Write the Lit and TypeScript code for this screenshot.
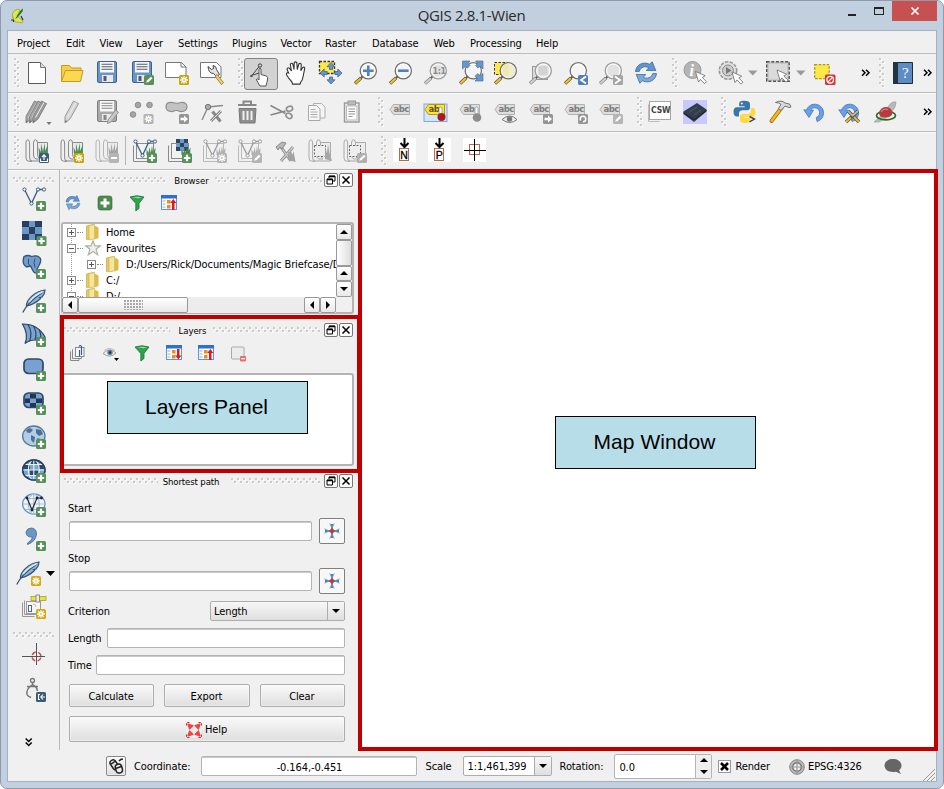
import { LitElement, html, css, svg, nothing } from "lit";
import { customElement } from "lit/decorators.js";

const GRAY = "#8c8c8c";
const BLUE = "#6a95c8";
const NAVY = "#3a5a78";

const icon = (body: unknown, size = 24) =>
  html`<svg class="ic" width=${size} height=${size} viewBox="0 0 ${size} ${size}">${body}</svg>`;

/* ---------- badges (10px squares in the lower right corner) ---------- */
const sq = (c: string, mark: unknown, x = 14, y = 14) =>
  svg`<g transform="translate(${x} ${y})"><rect x="0" y="0" width="10" height="10" rx="1.6" fill=${c}/>${mark}</g>`;
const plus = (x = 14, y = 14) => sq("#58905a", svg`<path d="M5 1.8v6.4M1.8 5h6.4" stroke="#fff" stroke-width="2.2"/>`, x, y);
const starMark = svg`<path d="M5 1.2v7.6M1.2 5h7.6M2.3 2.3l5.4 5.4M7.7 2.3l-5.4 5.4" stroke="#fff" stroke-width="1.3"/><circle cx="5" cy="5" r="1.1" fill="#e6cf70"/>`;
const star = (c = "#c9a50c", x = 14, y = 14) => sq(c, starMark, x, y);
const pen = (c = "#58905a", x = 14, y = 14) => sq(c, svg`<path d="M2.2 7.8l.8-2.4L7 1.8l1.5 1.4-3.8 3.9z" fill="#fff"/>`, x, y);
const minus = (c: string) => sq(c, svg`<path d="M2 5h6" stroke="#fff" stroke-width="2"/>`);
const arrowB = (c: string) => sq(c, svg`<path d="M1.5 3.8h3.5V1.5L9 5 5 8.5V6.2H1.5z" fill="#fff"/>`);

/* ---------- building blocks ---------- */
const floppy = (c: string, e: string, l: string) => svg`
  <rect x="2.5" y="0.5" width="19" height="21" rx="1.5" fill=${c} stroke=${e}/>
  <rect x="5" y="1" width="14" height="10.5" fill="#f8f8f8"/>
  <path d="M6.5 3.2h11M6.5 5.7h11M6.5 8.2h11" stroke=${l} stroke-width="1.1"/>
  <rect x="7" y="14" width="11" height="7" fill="#e9e9e9"/><rect x="8.5" y="15" width="3" height="5" fill=${l}/>`;

const lens = (handle: string, inner: unknown = nothing, dim = false) => svg`
  <path d="M8.8 15.2L6 18" stroke="#555" stroke-width="2"/>
  <path d="M7 17L1 22.6" stroke=${dim ? "#8a8a8a" : "#6b5a20"} stroke-width="3.4"/>
  <path d="M6.8 17.2L1.4 22.2" stroke=${handle} stroke-width="2"/>
  <circle cx="14.3" cy="9.7" r="8.1" fill=${dim ? "#e2e2e2" : "#f4f4f2"} stroke=${dim ? "#9d9d9d" : "#6f6f6f"} stroke-width="1.3"/>
  <circle cx="14.3" cy="9.7" r="6.6" fill="none" stroke="#fff" stroke-width="1"/>${inner}`;

const cursor = (x: number, y: number) =>
  svg`<path transform="translate(${x} ${y})" d="M0 0l3 10.5 2-2.6 4 4.3 2-2-4.2-4.2 2.9-1.8z" fill="#fff" stroke="#777" stroke-width=".9"/>`;

const refresh = (s: number) => svg`<g transform="scale(${s})">
  <path d="M1.5 10.5C2 4 9 0 15.5 3.2L18.2.8 21.8 9.6l-9.6-.2 2.6-2.6C11 4.800 6.500 6 5.200 10.500z" fill="#5f95d0" stroke="#40699c" stroke-width=".8"/>
  <path d="M22.500 12.500C22 19 15 23 8.500 19.800L5.800 22.200 2.200 13.400l9.600.2-2.600 2.600c3.800 2 8.300.8 9.600-3.700z" fill="#7aa9dc" stroke="#40699c" stroke-width=".8"/></g>`;

const undo = svg`<path d="M3.500 10A8.800 8.800 0 1 1 14 21.500l-.8-4A5 5 0 1 0 7.500 10l3 .2L6 17.500.8 9.800z" fill="#6ba0e4" stroke="#4076be" stroke-width=".8"/>`;

const tag = (txt: string, on = false) => svg`
  <path d="M1 9.500L4.500 4.500H20.500V14.500H4.500z" fill=${on ? "#ffe23a" : "#dedede"} stroke=${on ? "#b39a14" : "#b0b0b0"}/>
  <text x="4.600" y="12" class="tag" fill=${on ? "#5b5426" : "#7c7c7c"}>${txt}</text>`;

const pencil = (x: number, c = "#d5d5d5", e = "#9a9a9a") => svg`<g transform="translate(${x} 0)"><path d="M3 16.500L11.500 1l5 2.600L8 19l-5 4z" fill=${c} stroke=${e}/><path d="M5.500 17.500L14 2.500" stroke="#f0f0f0"/><path d="M3 23l.4-3 2 1.300z" fill="#777"/></g>`;

const gpen = svg`<path d="M13 20l7.500-10 3 2.200L16 22l-3.500 1.500z" fill="#c8c8c8" stroke="#8e8e8e" stroke-width=".9"/>`;

const scroll = (e: string, f: string, grass: string | null) => svg`
  <path d="M12.500 3.500h10v18.500H4" fill=${f} stroke=${e}/>
  <path d="M1 4q0-3.200 1.800-3.200T4.600 4v15q.2 3.200 2.400 3.200H3.800Q1 22.200 1 19z" fill="#f0f0f0" stroke=${e}/>
  <path d="M8.500 4q0-3.200 2-3.200t2 3.200v11q0 3.500 2.500 5H11q-2.500-1-2.500-4z" fill="#f0f0f0" stroke=${e}/>
  ${grass ? svg`<path d="M14 15l-.5-7 2.300 5 .2-8.500 2 8L19.700 4l.5 8 2.600-6.500L22.500 15z" fill=${grass}/>` : nothing}`;

const pages = (e: string) => svg`<path d="M.5 6.500v16h14" fill="none" stroke=${e}/><rect x="3.500" y="4.500" width="17" height="15" fill="#f2f2f2" stroke=${e}/>`;
const grassy = (c: string) => svg`<path d="M13.500 16V10l2 4 .8-6 1.500 6L19 6.500l1 6.500 2.500-4.500L22 16z" fill=${c}/>`;
const vee = (c: string) => svg`<path d="M2.500 2.500l7 14L16 2.500h6" fill="none" stroke=${c} stroke-width="1.300"/><circle cx="2.500" cy="2.500" r="1.600" fill="#fff" stroke=${c}/><circle cx="9.500" cy="16.500" r="1.600" fill="#fff" stroke=${c}/><circle cx="16" cy="2.500" r="1.600" fill="#fff" stroke=${c}/><circle cx="22" cy="2.500" r="1.600" fill="#fff" stroke=${c}/>`;
const hammers = svg`<path d="M8 8L18 22M20 8L8 22" stroke="#8d8d8d" stroke-width="3"/><path d="M8 8L18 22M20 8L8 22" stroke="#cfcfcf" stroke-width="1.200"/><path d="M3 8l6-5 4 1-4 6-2-2-2 3z" fill="#b9b9b9" stroke="#8a8a8a"/>`;
const hand = svg`<path d="M4.500 12L3 8q1-2.400 2.700-.3L7.500 10 6.300 3.500q.8-2.300 2.500-.5L10 8.500 10.200 1.800q1.300-1.900 2.600 0L13.300 8.500 14.800 3q1.600-1.500 2.500.6L16.800 9.700l2-3.300q1.700-.8 1.900 1L19 16q-.4 3.500-2.500 5.500l-.5 1.600H8.500L8 21q-3-3-5.500-7.300-.2-2.600 2-1.700z" fill="#fff" stroke="#333" stroke-width="1.100"/>`;
const arrow4 = svg`<path d="M12 1.500l4 4.200h-2.500v2.800h-3V5.700H8zM12 23l4-4.200h-2.500V16h-3v2.800H8zM1 12l4.200-4v2.500h3v3h-3V16zM23 12l-4.200-4v2.500h-3v3h3V16z" fill="#6696cd" stroke="#41648c" stroke-width=".8"/>`;
const globe = (f: string, e: string) => svg`<ellipse cx="11.800" cy="11" rx="11.200" ry="10" fill=${f} stroke=${e} stroke-width="1.300"/>`;
const meridians = (e: string) => svg`<path d="M11.800 1v20M1 11h22M3 5.500h18M3 16.500h18" stroke=${e} stroke-width="1.100"/><ellipse cx="11.800" cy="11" rx="5.500" ry="10" fill="none" stroke=${e} stroke-width="1.100"/>`;
const feather = svg`<path d="M4.500 17C4 11 13 2 23 1c0 3-1 5-3 7l-2.500.8 1 .7Q13 15 4.500 17z" fill="#8fb4dc" stroke="#35536f" stroke-width="1.200"/><path d="M.8 23.500Q5 14 21 3" fill="none" stroke="#35536f" stroke-width="1.300"/><path d="M7 13Q12 6.500 21 2.500" fill="none" stroke="#dbe8f5" stroke-width="1.500"/>`;

/* ---------- icon table ---------- */
const I: Record<string, unknown> = {
  newdoc: svg`<path d="M3.500 1.500h12l5 5v16h-17z" fill="#fff" stroke="#5c5c5c"/><path d="M15.500 1.500v5h5" fill="#ddd" stroke="#777"/>`,
  open: svg`<path d="M1.500 20V4.500h8l2 2.500h9.500v4" fill="#f7cf45" stroke="#c3992a"/><path d="M1.500 20.500L5.500 9.500h17.500l-2.500 11z" fill="#fcd850" stroke="#c3992a"/>`,
  save: floppy(BLUE, "#3f6087", "#4c5c6e"),
  saveas: svg`${floppy(BLUE, "#3f6087", "#4c5c6e")}${pen()}`,
  composer: svg`<path d="M.5 1.500h16l4.500 4.500v10.500H.500z" fill="#fff" stroke="#777"/><path d="M16 1.500V6h5" fill="none" stroke="#777"/>${star()}`,
  manager: svg`<path d="M.5 1.500h16l4.500 4.500v10.500H.500z" fill="#fff" stroke="#777"/><path d="M8 5.500l3.500 3 2-1L13 4.500q3.500.5 3.500 4l3 5-3 2-3-3q-5 0-5.500-7z" fill="#e2e2e2" stroke="#444"/><path d="M17 13.500l6.500 8-2 2.200-6.500-8.500z" fill="#f2cf66" stroke="#8c7430" stroke-width=".8"/>`,
  touch: svg`<path d="M2 14.500L11 3.500M4 13l6-2" stroke="#444"/><circle cx="11" cy="3.500" r="1.700" fill="#ccc" stroke="#444"/><circle cx="2.500" cy="14" r="1.300" fill="#555"/><path d="M10 16V7q1-1.800 2 0v5.500l5.500 1.500q1.500 1 1 4l-1.500 6H11L7.500 18q0-2.500 2.500 0z" fill="#fff" stroke="#555"/>`,
  hand,
  pansel: svg`<rect x=".5" y=".500" width="15" height="12" fill="#ffe84a" stroke="#333" stroke-width="1.300" stroke-dasharray="2.500 1.500"/>${arrow4}`,
  zin: lens("#e9b935", svg`<path d="M14.300 4.500v10.500M9 9.700h10.600" stroke="#4f82bd" stroke-width="2.600"/>`),
  zout: lens("#f0c23e", svg`<path d="M9 9.700h10.600" stroke="#4f82bd" stroke-width="2.600"/>`),
  z11: lens("#cfcfcf", svg`<text x="8.600" y="13" class="one">1:1</text>`, true),
  zfull: svg`${lens("#f0c23e")}<path d="M3.500 0h7.500L9 2.500 11 4.500 8.500 7 6.500 5.200 3.500 8zM24 0v8L21.200 5.200 19 7l-2.500-2.500L18.700 2.500 16.500 0zM24 20h-8l2.400-2.400-2.400-2.300 2.700-2.700 2.400 2.400L24 12.500z" fill="#6a97ca" stroke="#3f6690" stroke-width=".6"/>`,
  zsel: svg`<rect x=".5" y="1.500" width="14" height="12" fill="#ffe84a" stroke="#333" stroke-dasharray="2.500 1.500"/>${lens("#f0c23e")}<circle cx="14.300" cy="9.700" r="7" fill="#f0edcf"/><path d="M9 5.500q2-2.500 5.500-2.500v12q-3.500 0-5.500-2.500z" fill="#efe8b0"/>`,
  zlayer: svg`<rect x="3.500" y="5.500" width="15" height="13" fill="#ddd" stroke="#999"/>${lens("#cfcfcf", nothing, true)}<rect x="9.500" y="5" width="9" height="9" fill="#d3d3d3"/>`,
  zlast: svg`${lens("#f0c23e")}${sq("#4f82bd", svg`<path d="M8 1.500L3 5l5 3.500" fill="none" stroke="#fff" stroke-width="1.800"/>`)}`,
  znext: svg`${lens("#cfcfcf", nothing, true)}${sq("#a5a5a5", svg`<path d="M2 1.500L7 5 2 8.500" fill="none" stroke="#fff" stroke-width="1.800"/>`)}`,
  refresh: refresh(1),
  ident: svg`<circle cx="9.500" cy="9" r="8.500" fill="#b4b4b4" stroke="#9b9b9b"/><text x="6.500" y="14.500" class="info">i</text>${cursor(12.500, 10.500)}`,
  action: svg`<circle cx="10" cy="9.500" r="8.700" fill="#e2e2e2" stroke="#999" stroke-width="1.600" stroke-dasharray="3.500 1.200"/><circle cx="10" cy="9.500" r="5.500" fill="#cdcdcd" stroke="#888"/><path d="M8 6l5.500 3.500L8 13z" fill="#777"/>${cursor(14, 11)}`,
  select: svg`<rect x=".7" y=".700" width="22.500" height="19.500" fill="#c9c9c9" stroke="#555" stroke-width="1.400" stroke-dasharray="3 1.600"/><rect x="3" y="3" width="18" height="15" fill="#dadada"/>${cursor(11, 9)}`,
  desel: svg`<rect x=".7" y="3.700" width="14.500" height="14" fill="#ffe84a" stroke="#a8912a" stroke-width="1.300" stroke-dasharray="2.500 1.500"/><rect x="11" y="13.500" width="10.500" height="10.500" rx="1.500" fill="#d63238"/><circle cx="16.200" cy="18.700" r="3.300" fill="none" stroke="#fff" stroke-width="1.300"/><path d="M14 21l4.500-4.600" stroke="#fff" stroke-width="1.200"/>`,
  book: svg`<path d="M.5 1.500h19v21H.500z" fill="#5c8cc4" stroke="#222b36"/><rect x="0" y="1" width="5" height="22" fill="#25323f"/><text x="9" y="17" class="q">?</text>`,

  pencils: svg`${pencil(-2, "#a5a5a5", "#858585")}${pencil(1.5, "#a5a5a5", "#858585")}${pencil(5, "#9a9a9a", "#858585")}<path d="M21.500 22h5l-2.500 3z" fill="#777"/>`,
  pencil: svg`${pencil(2)}`,
  saveed: svg`${floppy("#a9a9a9", "#7d7d7d", "#888")}${gpen}`,
  addpt: svg`<circle cx="8" cy="5" r="2.800" fill="#a6a6a6" stroke=${GRAY}/><circle cx="19.500" cy="5" r="2.800" fill="#a6a6a6" stroke=${GRAY}/><circle cx="3" cy="14.500" r="2.800" fill="#a6a6a6" stroke=${GRAY}/>${star("#b1b1b1", 13.500, 14)}`,
  movef: svg`<path d="M1 6.500Q1 1.500 8 2.500q4 1.500 8 0 6-.5 6 4.500-.5 5-7 4.500-4-2-7 0-7 .5-7-5z" fill="#c2c2c2" stroke=${GRAY} stroke-width="1.200"/>${arrowB("#949494")}`,
  node: svg`<path d="M2 20L8 7l15-1.500" fill="none" stroke=${GRAY} stroke-width="1.400"/><circle cx="8" cy="7" r="2.700" fill="#aaa" stroke="#777"/><path d="M11 21L21 11M12.500 11.500l8 10" stroke="#888" stroke-width="3"/><path d="M11 21L21 11" stroke="#ddd"/>`,
  trash: svg`<path d="M4 8.500h17l-1 14.500H5z" fill="#8f8f8f" stroke="#777"/><path d="M3 5h18.500M8.500 4V1.500H16V4" fill="none" stroke="#888" stroke-width="2"/><path d="M8.500 11v9M12.500 11v9M16.500 11v9" stroke="#f0f0f0" stroke-width="2"/>`,
  cut: svg`<path d="M.5 5.500l15 8M.5 15l15-4" stroke="#888" stroke-width="1.700"/><ellipse cx="19.500" cy="8.800" rx="3.200" ry="2.400" fill="none" stroke="#8f8f8f" stroke-width="1.600" transform="rotate(-20 19.500 8.800)"/><ellipse cx="19" cy="15.800" rx="3.200" ry="2.400" fill="none" stroke="#8f8f8f" stroke-width="1.600" transform="rotate(30 19 15.800)"/>`,
  copy: svg`<path d="M8.500 3.500h8l3.500 3.500v11h-11.500z" fill="#f4f4f4" stroke="#b0b0b0"/><path d="M3.500 5.500h8l3.500 3.500v11.500H3.500z" fill="#f7f7f7" stroke="#a8a8a8"/><path d="M5.500 9.500h5M5.500 12h7M5.500 14.500h7M5.500 17h7" stroke="#aaa"/>`,
  paste: svg`<rect x="4.500" y="3" width="14.500" height="19" fill="#eee" stroke="#9a9a9a" stroke-width="1.400"/><rect x="8" y="1" width="7.500" height="4" fill="#bbb" stroke="#999"/><rect x="6.500" y="6" width="10.500" height="14" fill="#fafafa" stroke="#bbb"/><path d="M8.500 9h6.500M8.500 11.500h6.500M8.500 14h6.500M8.500 16.500h4" stroke="#999"/>`,
  abc: tag("abc"),
  abon: svg`<rect x="0" y="4" width="23" height="17.500" class="hl"/>${tag("ab", true)}<rect x="15" y="7" width="3" height="8" rx="1.500" fill="#fff" stroke="#888" stroke-width=".7"/><circle cx="17.500" cy="17" r="4" fill="#a81c1c"/>`,
  abpin: svg`${tag("ab")}<rect x="16" y="7" width="3" height="8" rx="1.500" fill="#fff" stroke="#888" stroke-width=".7"/><circle cx="18" cy="17.500" r="4.300" fill="#8c8c8c"/>`,
  abeye: svg`${tag("abc")}<path d="M8 19.500q8-7 15 0-7 6-15 0z" fill="#eee" stroke="#777"/><circle cx="15.500" cy="19" r="2.700" fill="#777"/>`,
  abmove: svg`${tag("abc")}${arrowB("#959595")}`,
  abrot: svg`${tag("abc")}${sq("#959595", svg`<path d="M2.200 6.500V5a2.800 2.800 0 1 1 2.800 2.800" fill="none" stroke="#fff" stroke-width="1.500"/>`)}`,
  abedit: svg`${tag("abc")}${pen("#b5b5b5")}`,
  csw: svg`<path d="M.5 4.500v17h11" fill="none" stroke="#bbb"/><rect x="1.500" y="1.500" width="21" height="18" fill="#fff" stroke="#a6a6a6"/><text x="3" y="13" class="csw">CSW</text>`,
  slab: svg`<rect x="0" y="0" width="24" height="24" fill="#c9c9ff"/><path d="M.5 11.500L14 3l9.500 6.500v2L11 22 .500 14z" fill="#333d4b"/><path d="M.5 13l10.500 6.800L23.500 10.500" fill="none" stroke="#19202a"/><path d="M6 12.500l8-5.500M11 15l7-5" stroke="#4e5a6c"/>`,
  python: svg`<path d="M11 .8c-4 0-4.800 1.200-4.800 3v2.500h5.500v.9H4C1.500 7.200.5 9 .500 11.800c0 3 1.300 4.700 3.300 4.700H6v-3c0-2 1.500-3.200 3.500-3.200h5c1.500 0 2.500-1 2.500-2.500V4c0-2.200-2-3.200-6-3.200z" fill="#3a76a8"/><circle cx="8.800" cy="3.500" r="1" fill="#fff"/><path d="M12 23c4 0 5.200-1.200 5.200-3v-2.300h-5.500v-.9h7.500c2.500 0 3.300-1.800 3.300-4.600 0-3-1.300-4.500-3.300-4.500H18v3c0 2-1.500 3.200-3.500 3.200h-5C8 13.900 7 14.900 7 16.400V20c0 2.200 1.500 3 5 3z" fill="#ffd93f"/><path d="M16.500 16.500l5 2.500-5 2.800" fill="none" stroke="#444" stroke-width="1.400"/>`,
  hammer: svg`<path d="M3.500 21L14 7" stroke="#9c6e0b" stroke-width="4" stroke-linecap="round"/><path d="M3.700 20.700L14 7" stroke="#f5b718" stroke-width="2.600" stroke-linecap="round"/><path d="M7.500 2.500q6-3 9.500.5l4.500 1 1.500 3-2 .5-4-1.500-4 4.500-2.500-2 2.500-4q-2-2-5.500-2z" fill="#d8d8d8" stroke="#666" stroke-width=".9"/>`,
  undo,
  undot: svg`${undo}<path d="M8 22L20 11M10 11l11 11" stroke="#5d5340" stroke-width="3.400"/><path d="M8 22l5-4.500M16 17l5 5" stroke="#e6b93a" stroke-width="2"/><path d="M14 16l6-5M10 11l5 5" stroke="#bbb" stroke-width="1.700"/>`,
  grass: svg`<path d="M1 22l8-7L17 4q3-3 6-2 0 5-3 8l-8 9-6 3z" fill="#b9b9b9" stroke="#999" stroke-width=".6"/><ellipse cx="13" cy="15.500" rx="9.500" ry="4.300" fill="none" stroke="#2b6b22" stroke-width="1.700"/><path d="M6 13q1-5 6-6 6-.5 7.500 5.500-.5 5-7 5T6 13z" fill="#b63c40"/><path d="M8 11.500q3-3.500 7-2" fill="none" stroke="#d97c7e" stroke-width="1.300"/>`,

  gopen: svg`${scroll("#8a8a8a", "#e9e9e9", "#4f8f55")}${sq(NAVY, svg`<path d="M1.500 5.500v3h7v-3M5 7V2.500M3 4l2-2.200L7 4" fill="none" stroke="#fff" stroke-width="1.200"/>`)}`,
  gnew: svg`${scroll("#8a8a8a", "#e9e9e9", "#4f8f55")}${star()}`,
  gclose: svg`${scroll("#b5b5b5", "#ececec", "#a4a4a4")}${minus("#b5b5b5")}`,
  gvec: svg`${pages("#8a8a8a")}${vee("#3a5f80")}${grassy("#4f8f55")}${plus()}`,
  gras: svg`${pages("#8a8a8a")}<rect x="8" y="0" width="12" height="12" fill="#6e9acb"/><path d="M8 0h4v4h4V0h4v4h-4v4h4v4h-4V8h-4v4H8V8h4V4H8z" fill="#2b4763"/>${grassy("#3f8347")}${plus()}`,
  gvnew: svg`${pages("#bababa")}${vee("#9a9a9a")}${grassy("#b0b0b0")}${star("#b5b5b5")}`,
  gvedit: svg`${pages("#bababa")}${vee("#9a9a9a")}${grassy("#b0b0b0")}${pen("#b5b5b5")}`,
  gtools: svg`${hammers}<path d="M15 21V12l2 4V10l2.500 6 1-4 2 11z" fill="#a2a2a2"/>`,
  gregion: svg`${scroll("#aaa", "#ececec", null)}<rect x="6.500" y="6.500" width="11" height="11" fill="#eee" stroke="#666" stroke-dasharray="2 1.500"/><path d="M17 20V8l2 6 1-9 1.500 9L24 22z" fill="#a6a6a6"/>`,
  gredit: svg`${scroll("#aaa", "#ececec", null)}<rect x="6.500" y="6.500" width="11" height="11" fill="#eee" stroke="#666" stroke-dasharray="2 1.500"/>${pen("#b0b0b0")}`,
  nN: svg`<rect x="0" y="-1" width="23" height="24" fill="#fff"/><path d="M11.500-1V7M7.500 4l4 4 4-4" fill="none" stroke="#000" stroke-width="2"/><rect x="6.500" y="9.500" width="9" height="12" fill="#fff" stroke="#b06a4e"/><text x="7.300" y="19.500" class="np">N</text>`,
  nP: svg`<rect x="0" y="-1" width="23" height="24" fill="#fff"/><path d="M11.500-1V7M7.500 4l4 4 4-4" fill="none" stroke="#000" stroke-width="2"/><rect x="6.500" y="9.500" width="9" height="12" fill="#fff" stroke="#b06a4e"/><text x="7.800" y="19.500" class="np">P</text>`,
  cross: svg`<rect x="0" y="-1" width="23" height="24" fill="#fff"/><rect x="6.500" y="5.500" width="10" height="10" fill="none" stroke="#b06a4e"/><path d="M11.500 0v22M1 11.500h22" stroke="#000" stroke-width="1"/>`,

  lvec: svg`${vee(NAVY)}${plus()}`,
  lras: svg`<rect x="0" y="0" width="20" height="19" fill="#6e95c8"/><path d="M0 0h7v6h6V0h7v6h-7v7h7v6h-7v-6H7v6H0v-6h7V6H0z" fill="#263f5c"/>${plus(14.500, 15)}`,
  lpg: svg`<path d="M2 1.500q4-2 7.500 0 5-1.500 7.500.5 3.500 2 0 8.500l-2 3.500.500 4q-3 1-5-3l-2-4-4 1q-5-3-2.500-10.500z" fill="#6f9bcf" stroke="#35536f" stroke-width="1.300"/><path d="M6.500 4q-1 5 1.500 7M13 3.500q-2 4 0 9" fill="none" stroke="#35536f"/>${plus()}`,
  feather: svg`${feather}${plus()}`,
  mssql: svg`<path d="M.5 1Q16 1 23 14v2q-4-1-9.500 1Q7 17 3 20.500 7 12 .500 1z" fill="#7ba4d3" stroke="#2e475f" stroke-width="1.200"/><path d="M6 1.500q5 8 1.500 17M11.500 3q4 7 1.500 14M17 6.500q2.500 5 1.500 9" fill="none" stroke="#2e475f" stroke-width="1.200"/>${plus()}`,
  rect: svg`<rect x="2" y="2" width="19" height="14.500" rx="4.500" fill="#7a9fd2" stroke="#2f4964" stroke-width="1.700"/>${plus()}`,
  rectras: svg`<rect x="2" y="2" width="19" height="14.500" rx="4.500" fill="#7a9fd2" stroke="#2f4964" stroke-width="1.700"/><path d="M8 3h6v4.500h6V12h-6v4H8v-4H3V7.500h5zM8 7.500V12h6V7.500z" fill="#1f3852" fill-rule="evenodd"/>${plus()}`,
  wms: svg`${globe("#b3cde8", "#55799f")}<path d="M4 5l4-2 3 2-3 3-3-.5zM9 10l4 2-1 6-3-3zM14 4l5 1 2 4-4 2-3-3zM15 13l4 1-2 4z" fill="#4b7094"/>${plus()}`,
  wcs: svg`${globe("#7ba4d3", "#263f5c")}<path d="M3 5h5v5H1zM16 5h4l3 5h-6zM8 11h8v5H8zM9 1.500h6V5H9z" fill="#2d4a6b"/>${meridians("#eaf2fa")}${globe("none", "#263f5c")}${plus()}`,
  wfs: svg`${globe("#f2f6fb", "#6a95c8")}${meridians("#9fbfe0")}<path d="M5 5l5 12 5-12h4.500" fill="none" stroke="#222" stroke-width="1.200"/><circle cx="5" cy="5" r="1.400" fill="#222"/><circle cx="10" cy="17" r="1.400" fill="#222"/><circle cx="19.500" cy="5" r="1.400" fill="#222"/><circle cx="15" cy="5" r="1.400" fill="#222"/>${plus()}`,
  comma: svg`<path d="M4 5q1-4 5.500-4Q14.500 1.500 14.500 7 14 14.500 5.500 17.500v-1.500Q10 13.500 10.500 10 4 10.500 4 5z" fill="#6c96c6" stroke="#45688c" stroke-width=".8"/>${plus()}`,
  newshp: svg`<g transform="translate(-6 0)">${feather}${star("#d3ab16", 15, 15)}</g>`,
  gps: svg`<path d="M.5 7.500v14h12M2.500 5.500v14h12" fill="none" stroke="#999"/><rect x="4.500" y="6.500" width="14" height="12" fill="#f5f5f5" stroke="#999"/><rect x="9" y="1.500" width="15" height="4" fill="#e9e436" stroke="#99952e" stroke-width=".7"/><rect x="14" y="0" width="3.500" height="7" fill="#eee" stroke="#777" stroke-width=".8"/><path d="M11 9q3 0 3 3" fill="none" stroke="#bbb"/><rect x="6.500" y="10.500" width="3" height="6" fill="#fff" stroke="#46698c"/>${star("#d3ab16")}`,
  cap: svg`<path d="M14.500-1v22M0 12.500h23" stroke="#555" stroke-width="1"/><circle cx="14.500" cy="12.500" r="4.500" fill="none" stroke="#c4474a" stroke-width="1.500" stroke-dasharray="4.500 2.600" stroke-dashoffset="-1.200"/>`,
  compass: svg`<circle cx="10.500" cy="2.500" r="2" fill="none" stroke="#777" stroke-width="1.300"/><path d="M10.500 4.500v3M10 7q-6 4-5 9.500 1 2 4 3M11 7q4 2 4.500 6M5 8.500h11" fill="none" stroke="#777" stroke-width="1.500"/>${sq(NAVY, svg`<path d="M4 2.500H2.500v5H4M5.500 5h3.500M7 2.500L4.800 5 7 7.500" fill="none" stroke="#fff" stroke-width="1.100"/>`)}`,
};

/* 16px icons */
const S: Record<string, unknown> = {
  refresh: refresh(0.66),
  add: svg`<rect x="1" y="1" width="14" height="14" rx="2.500" fill="#4b8b4e" stroke="#35663a" stroke-width=".6"/><path d="M8 3.500v9M3.500 8h9" stroke="#fff" stroke-width="3"/>`,
  filter: svg`<path d="M1 2q7-2.500 14 0l-5 6.500v5L6.800 16V8.500z" fill="#2fa24d" stroke="#1d7535" stroke-width=".8"/><path d="M3 2.200q5-1 10 0l-3.500 1z" fill="#9fdcae"/>`,
  collapse: svg`<rect x=".5" y="1" width="15" height="13.500" fill="#fff" stroke="#5f95e0"/><rect x="0" y="0" width="16" height="3.500" fill="#2f6fd0"/><path d="M1.500 6h3M1.500 9h3M1.500 12h3" stroke="#9ab"/><rect x="6" y="5" width="3.500" height="3.500" fill="#f08a24"/><rect x="6" y="10" width="3.500" height="3.500" fill="#f08a24"/><path d="M12.300 4l3.200 4h-2v7h-2.500V8H9.200z" fill="#e01818"/>`,
  expand: svg`<rect x=".5" y="1" width="15" height="13.500" fill="#fff" stroke="#5f95e0"/><rect x="0" y="0" width="16" height="3.500" fill="#2f6fd0"/><path d="M1.500 6h3M1.500 9h3M1.500 12h3" stroke="#9ab"/><rect x="6" y="5" width="3.500" height="3.500" fill="#f08a24"/><rect x="6" y="10" width="3.500" height="3.500" fill="#f08a24"/><path d="M12.300 14.500l3.200-4h-2V4h-2.500v6.500H9.200z" fill="#e01818"/>`,
  group: svg`<path d="M.5 6.500v9h8.500v-2" fill="none" stroke="#888"/><path d="M3 4.500h-.5v9h9v-2" fill="none" stroke="#888"/><rect x="5.500" y="2.500" width="8.500" height="9" fill="#fafafa" stroke="#888"/><path d="M9.500 5v6.500M11.500 10V1.500q-1.500-2-2.500 0" fill="none" stroke="#3c5f86" stroke-width="1.200"/>`,
  eye: svg`<path d="M1 8.500q6-7 13-.5-6 6-13 .5z" fill="#e8eef4" stroke="#999" stroke-width=".9"/><path d="M2 5.500q5-4 11 0" fill="none" stroke="#bbb"/><circle cx="8" cy="7.500" r="2.700" fill="#5d82ad"/><circle cx="8" cy="7.500" r="1.200" fill="#234"/><path d="M12 13h5l-2.500 3z" fill="#000"/>`,
  remove: svg`<rect x="1.500" y="2" width="12.500" height="12" rx="1" fill="#ececec" stroke="#aaa"/><rect x="10" y="11" width="6" height="5.500" rx="1" fill="#ef6a6a"/><path d="M11 13.700h4" stroke="#fff" stroke-width="1.200"/>`,
  folder: svg`<path d="M1.500 2l7-1.500v14l-7 1z" fill="#e6cb62" stroke="#bb9c3a" stroke-width=".6"/><path d="M4 1.500L9.500.5V15L4 15.800z" fill="#f7e59a" stroke="#c9ab48" stroke-width=".6"/><path d="M9.500 1.500l4 2V14l-4 1.500z" fill="#dbbb4a"/>`,
  fav: svg`<path d="M8 .8l2 5h5.300l-4.200 3.500 1.600 5.400L8 11.500l-4.700 3.200 1.600-5.400L.700 5.800H6z" fill="#f0f0ea" stroke="#aeb0a4" stroke-width="1.200"/>`,
  crossblue: svg`<path d="M8 1v14M1 8h14" stroke="#2d86c4" stroke-width="1.900"/><path d="M5.800.5L8 5l2.200-4.500M5.800 15.500L8 11l2.200 4.500M.5 5.800L5 8 .500 10.200M15.500 5.800L11 8l4.500 2.200" fill="none" stroke="#7d95a8" stroke-width="1"/><circle cx="8" cy="8" r="2.200" fill="#dc2f2f"/>`,
  buoy: svg`<circle cx="8" cy="8" r="5.500" fill="none" stroke="#fafafa" stroke-width="4"/><path d="M2 2l5 1.500L3.500 7zM14 2L9 3.500 12.500 7zM2 14l5-1.500L3.500 9zM14 14l-5-1.500L12.500 9z" fill="#ee4444" stroke="#ee4444" stroke-width="1.300" stroke-linejoin="round"/><path d="M.5 3.500v-2l1-1h2M12.500.5h2l1 1v2M15.500 12.500v2l-1 1h-2M3.500 15.500h-2l-1-1v-2" fill="none" stroke="#b53030"/>`,
  mouse: svg`<g fill="none" stroke="#222" stroke-width="1.500"><rect x="3.500" y="1.500" width="6" height="11" rx="3" fill="#ddd" transform="rotate(-35 6.500 7)"/><path d="M2.500 6.500l5-3.500"/><rect x="7.500" y="6" width="6.500" height="9" rx="3.200" fill="#eee" transform="rotate(-15 11 10)"/><path d="M7.500 10.500l6-2M11 3q1.500-2 4-2"/></g>`,
  globe: svg`<circle cx="8" cy="8" r="7.300" fill="#b9b9b9" stroke="#888"/><circle cx="8" cy="8" r="4.300" fill="#eee" stroke="#777" stroke-width="1.500"/><path d="M8 0v16M0 8h16" stroke="#999" stroke-width="1.200"/>`,
};

const tri = (dir: "up" | "down" | "left" | "right") => {
  const d = { up: "M0 6l4-4 4 4z", down: "M0 2h8L4 6z", left: "M6 0v8L2 4z", right: "M2 0l4 4-4 4z" }[dir];
  return html`<svg width="8" height="8" viewBox="0 0 8 8"><path d=${d} fill="#000"/></svg>`;
};

const vgrip = html`<svg class="vgrip" width="6" height="30"><rect width="6" height="30" fill="url(#dots)"/></svg>`;
const hgrip = (w: number) => html`<svg class="hgrip" width=${w} height="6"><rect width=${w} height="6" fill="url(#dots)"/></svg>`;
const b = (n: string, cls = "") => html`<div class="slot ${cls}">${icon(I[n])}</div>`;
const chev = html`<svg width="9" height="8"><path d="M1 .8l3 3-3 3M5 .8l3 3-3 3" fill="none" stroke="#000" stroke-width="1.500"/></svg>`;
const drop = html`<div class="drop"><svg width="10" height="6"><path d="M0 .5h9.500L4.800 5.500z" fill="#999"/></svg></div>`;

@customElement("app-root")
class AppRoot extends LitElement {
  static styles = css`
    :host { display: block; width: 944px; height: 789px; overflow: hidden; background: #fff; color: #000; font: 11px/14px "DejaVu Sans Condensed", "DejaVu Sans", sans-serif; font-stretch: condensed; letter-spacing: -0.1px; }
    * { box-sizing: border-box; }
    svg { display: block; overflow: visible; flex: none; }
    .window { height: 789px; border: 1px solid #8f9baa; border-radius: 7px; background: #c1cfde; padding: 0 6px 6px; display: flex; flex-direction: column; }
    .title { height: 29px; flex: none; display: flex; align-items: flex-start; font: 15px/20px "Open Sans", sans-serif; letter-spacing: -0.33px; color: #2a2a2a; }
    .title .name { flex: 1; text-align: center; padding: 4px 0 0 70px; }
    .title .logo { margin: 7px 0 0 4px; }
    .min { width: 8px; height: 2px; background: #222; margin: 13px 18px 0 0; }
    .max { width: 10px; height: 8px; border: 1px solid #222; border-top-width: 2px; margin: 6px 8px 0 0; }
    .close { width: 45px; height: 20px; background: #c75050; display: flex; align-items: center; justify-content: center; }
    .client { flex: 1; border: 1px solid #a3b2c2; background: #f0f0f0; display: flex; flex-direction: column; }
    .menu { height: 23px; border-bottom: 1px solid #bcbcbc; display: flex; padding: 6px 0 0 9px; flex: none; }
    .menu span { white-space: nowrap; }
    .bar { height: 39px; border-bottom: 1px solid #bcbcbc; box-shadow: 0 1px #fafafa; display: flex; flex: none; }
    .bar.last { height: 38px; }
    .slot { width: 35px; padding: 7px 0 0 5px; flex: none; }
    .slot.on { padding: 4px 0 0 0; }
    .slot.on .ic { border: 1px solid #828282; border-radius: 3px; background: #d2d2d2; box-sizing: content-box; padding: 3px 4px; }
    .vgrip { margin: 4px 0 0 8px; }
    .bar > .vgrip:first-child { margin-left: 6px; }
    .more { width: 10px; padding-top: 15px; flex: none; }
    .drop { width: 13px; padding: 16px 0 0 1px; flex: none; }
    .drop svg { margin-left: -1px; }
    .gap1 { width: 1px; flex: none; }
    .sep { width: 3px; margin: 4px 0; border-left: 1px solid #b5b5b5; }
    .main { display: grid; grid-template-columns: 52px 298px 580px; height: 581px; }
    .left { border-right: 1px solid #b9b9b9; height: 580px; padding-top: 7px; }
    .left .hgrip { margin-left: 5px; }
    .left .slot ~ .hgrip { margin: 7px 0 2px 5px; }
    .left .slot { height: 34px; width: 51px; padding: 4px 0 0 14px; display: flex; }
    .left .slot .da { margin: 10px 0 0 0; }
    .left .down { margin: 30px 0 0 16px; width: 9px; height: 8px; transform: rotate(90deg); }
    .map { border: 4px solid #c00000; background: #fff; height: 582px; margin-top: -1px; display: flex; align-items: center; justify-content: center; padding: 0 0 36px 14px; }
    .note { width: 201px; height: 53px; border: 1px solid #000; background: #b7dde8; font: 21px/50px "Liberation Sans", sans-serif; letter-spacing: 0.05px; text-align: center; padding-right: 2px; flex: none; }
    .map .note { padding-right: 1px; }
    .dock { display: flex; flex-direction: column; }
    .dtitle { height: 14px; display: flex; align-items: center; flex: none; font-size: 9.500px; padding: 0 5px 0 4px; letter-spacing: -0.05px; }
    .dtitle .hgrip { margin-top: -1px; }
    .dtitle span { flex: 1; text-align: center; padding: 2px 0 0 2px; white-space: nowrap; }
    .path .dtitle span { padding: 2px 7px 0 0; letter-spacing: -0.12px; }
    .tb { width: 14px; height: 14px; border: 1px solid #777; border-radius: 2px; background: #fbfbfb; margin-left: 1px; display: flex; align-items: center; justify-content: center; flex: none; }
    .ticons { display: flex; gap: 16px; padding: 8px 0 0 5px; height: 35px; }
    .browser { height: 146px; padding-top: 3px; }
    .tree { width: 293px; height: 92px; margin-left: 1px; border: 2px solid #b4b4b4; border-radius: 3px; background: #f0f0f0; display: grid; grid-template: 73px 16px / 273px 16px; }
    .rows { background: #fff; overflow: hidden; }
    .row { height: 16px; display: flex; align-items: center; white-space: nowrap; padding-left: 4px; background: repeating-linear-gradient(#999 0 1px, transparent 1px 2px) 8px 0 / 1px 100% no-repeat; }
    .row > * { flex: none; }
    .row.in { padding-left: 24px; }
    .row .txt { padding: 2px 0 0 5px; }
    .pm { width: 9px; height: 9px; border: 1px solid #8a8a8a; background: #fff; display: flex; align-items: center; justify-content: center; }
    .dots { width: 6px; border-top: 1px dotted #888; margin: 0 2px 0 1px; }
    .sb { border: 1px solid #999; border-radius: 2px; background: linear-gradient(#fff, #e8e8e8); display: flex; align-items: center; justify-content: center; width: 16px; height: 16px; flex: none; }
    .vs { display: flex; flex-direction: column; height: 73px; }
    .vs .sb { height: 15.500px; }
    .vs .sb.thumb { height: 26px; background: linear-gradient(90deg, #fff, #ddd); }
    .hs { display: flex; background: #ececec; margin-left: -1px; }
    .hs .thumb { width: 110px; }
    .hs .thumb i { width: 19px; height: 10px; background: radial-gradient(circle at 1px 1px, #aaa 0.8px, transparent 1px) 0 0 / 3px 3px; }
    .hs .gap { flex: 1; }
    .layers { position: relative; height: 158px; padding-top: 7px; }
    .frame { position: absolute; left: 0; top: -1px; width: 301px; height: 158px; border: 4px solid #c00000; pointer-events: none; z-index: 1; }
    .layers .ticons { padding: 8px 0 0 10px; height: 36px; }
    .list { width: 293px; height: 93px; margin-left: 1px; border: 2px solid #b4b4b4; border-radius: 3px; background: #fff; padding: 6px 0 0 44px; }
    .form { padding: 14px 13px 0 9px; display: flex; flex-direction: column; }
    .form span { margin-left: -1px; }
    .fr { display: flex; align-items: center; }
    .fr span { position: relative; top: 1px; }
    .inp { height: 20px; border: 1px solid #b4b4b4; border-radius: 2px; background: #fff; box-shadow: inset 0 1px #c9c9c9; flex: 1; }
    .btn { border: 1px solid #adadad; border-radius: 2px; background: linear-gradient(#fafafa, #dedede); display: flex; align-items: center; justify-content: center; box-shadow: inset 0 0 0 1px rgba(255,255,255,.4); padding-right: 1px; }
    .btn.act { padding-top: 2px; }
    .pick { width: 26px; height: 26px; border-color: #7f7f7f; background: #f7f7f7; margin-left: 7px; padding: 0; }
    .combo { height: 20px; border: 1px solid #acacac; border-radius: 2px; background: linear-gradient(#f7f7f7, #dfdfdf); display: flex; align-items: center; padding-left: 3px; }
    .combo b { font-weight: normal; padding-top: 1px; }
    .combo .a { width: 17px; height: 18px; border-left: 1px solid #acacac; margin-left: auto; display: flex; align-items: center; justify-content: center; background: linear-gradient(#f7f7f7, #dfdfdf); }
    .status { flex: 1; display: flex; align-items: center; padding-left: 98px; white-space: nowrap; }
    .status > span { padding-top: 1px; }
    .status .inp { flex: none; text-align: center; line-height: 21px; }
    .status .btn { width: 20px; height: 20px; border-color: #888; padding: 0; }
    .spin { width: 98px; height: 25px; border: 1px solid #b4b4b4; border-radius: 2px; background: #fff; display: flex; padding: 6px 0 0 4px; margin-left: 11px; }
    .spin .ar { margin: -6px 0 0 auto; width: 16px; border-left: 1px solid #b4b4b4; background: #efefef; display: flex; flex-direction: column; align-items: center; justify-content: space-around; }
    .chk { width: 13px; height: 13px; border: 1px solid #999; background: #fff; margin-left: 6px; display: flex; align-items: center; justify-content: center; }
    .g1 { margin-left: 8px; } .g2 { margin-left: 11px; } .g3 { margin-left: 19px; } .g4 { margin-left: 3px; } .g5 { margin-left: 22px; } .g6 { margin-left: 4px; }
    .tag { font: bold 8.500px "DejaVu Sans", sans-serif; letter-spacing: -0.6px; }
    .one { font: bold 9px "DejaVu Sans Condensed", sans-serif; fill: #888; letter-spacing: -0.5px; }
    .info { font: italic bold 16px "Liberation Serif", serif; fill: #fff; }
    .q { font: 15px "Liberation Serif", serif; fill: #fff; }
    .csw { font: bold 8.500px "DejaVu Sans Condensed", "DejaVu Sans", sans-serif; fill: #444; letter-spacing: -0.1px; }
    .np { font: 10.500px "Liberation Sans", sans-serif; fill: #000; stroke: #000; stroke-width: 0.3px; }
    .hl { fill: #d5e4f6; stroke: #7da7dc; }
    .wide { display: flex; } .defs { position: absolute; }
  `;

  private titleBar(name: string, l: number, r: number, ml: number) {
    return html`<div class="dtitle">${hgrip(l)}<span>${name}</span>${hgrip(r)}
      <div class="tb" style="margin-left:${ml}px"><svg width="10" height="10"><path d="M3 3V1h6v5H7M1 4h5.500v5H1z" fill="none" stroke="#000"/><path d="M3 1.500h6M1 4.500h5.500" stroke="#000" stroke-width="1.500"/></svg></div>
      <div class="tb"><svg width="8" height="8"><path d="M.5.5l7 7M7.500.5l-7 7" stroke="#000" stroke-width="1.500"/></svg></div></div>`;
  }
  private row(label: string, ic: string, open: boolean, inner = false) {
    return html`<div class="row ${inner ? "in" : ""}"><div class="pm"><svg width="7" height="7"><path d=${open ? "M1 3.500h5" : "M1 3.500h5M3.500 1v5"} stroke="#555"/></svg></div><div class="dots"></div>${icon(S[ic], 16)}<span class="txt">${label}</span></div>`;
  }
  render() {
    const menus: [string, number][] = [["Project", 49], ["Edit", 33.5], ["View", 36.500], ["Layer", 42], ["Settings", 54], ["Plugins", 48.500], ["Vector", 44.500], ["Raster", 47], ["Database", 61.500], ["Web", 36.500], ["Processing", 66], ["Help", 40]];
    return html`
      <svg class="defs" width="0" height="0"><defs>
        <pattern id="dots" width="6" height="6" patternUnits="userSpaceOnUse"><rect x="1" y="1" width="2" height="2" fill="#fff"/><rect x="0" y="0" width="2" height="2" fill="#cacaca"/><rect x="4" y="4" width="2" height="2" fill="#fff"/><rect x="3" y="3" width="2" height="2" fill="#cacaca"/></pattern>
      </defs></svg>
      <div class="window">
        <div class="title">
          <svg class="logo" width="14" height="16"><path d="M2 10Q0 5 4 2.500 7 0 9 2l-3 6 6 5-1 2-4-1q-4 1-5-4.500z" fill="#dcea4e" stroke="#8c9a28" stroke-width=".7"/><path d="M4 11L10 2l2-1.500-.5 3L6 10z" fill="#1c7a1c"/><path d="M0 12h2.500v2M10 8l2 4" stroke="#333" stroke-width="1.200" fill="none"/></svg>
          <div class="name">QGIS 2.8.1-Wien</div><div class="min"></div><div class="max"></div>
          <div class="close"><svg width="8" height="8"><path d="M.5.5l7 7M7.500.5l-7 7" stroke="#fff" stroke-width="1.700"/></svg></div>
        </div>
        <div class="client">
          <div class="menu">${menus.map(([m, w]) => html`<span style="width:${w}px">${m}</span>`)}</div>
          <div class="bar">${vgrip}${["newdoc", "open", "save", "saveas", "composer", "manager"].map((n) => b(n))}${vgrip}
            ${b("touch", "on")}${["hand", "pansel", "zin", "zout", "z11", "zfull", "zsel", "zlayer", "zlast", "znext", "refresh"].map((n) => b(n))}
            ${vgrip}${b("ident")}${b("action")}${drop}${b("select")}${drop}${b("desel")}
            <span class="more" style="margin-left:17px">${chev}</span>${vgrip}<div class="gap1"></div><div class="gap1"></div><div class="gap1"></div>${b("book")}<span class="more">${chev}</span></div>
          <div class="bar">${vgrip}${["pencils", "pencil", "saveed", "addpt", "movef", "node", "trash", "cut", "copy", "paste"].map((n) => b(n))}${vgrip}
            ${["abc", "abon", "abpin", "abeye", "abmove", "abrot", "abedit"].map((n) => b(n))}${vgrip}${b("csw")}${b("slab")}${vgrip}<div class="gap1"></div>
            ${["python", "hammer", "undo", "undot", "grass"].map((n) => b(n))}<span class="more" style="margin-left:20px">${chev}</span></div>
          <div class="bar last">${vgrip}${["gopen", "gnew", "gclose"].map((n) => b(n))}<div class="sep"></div>
            ${["gvec", "gras", "gvnew", "gvedit", "gtools", "gregion", "gredit"].map((n) => b(n))}${vgrip}<div class="gap1"></div>${["nN", "nP", "cross"].map((n) => b(n))}</div>
          <div class="main">
            <div class="left">${hgrip(41)}
              ${["lvec", "lras", "lpg", "feather", "mssql", "rect", "rectras", "wms", "wcs", "wfs", "comma"].map((n) => b(n))}
              <div class="slot">${icon(I.newshp)}<svg class="da" width="9" height="5"><path d="M0 0h9L4.500 5z"/></svg></div>${b("gps")}
              ${hgrip(41)}${b("cap")}${b("compass")}<div class="down">${chev}</div></div>
            <div class="dock">
              <div class="browser">${this.titleBar("Browser", 102, 108, 1)}
                <div class="ticons">${["refresh", "add", "filter", "collapse"].map((n) => icon(S[n], 16))}</div>
                <div class="tree"><div class="rows">
                    ${this.row("Home", "folder", false)}${this.row("Favourites", "fav", true)}${this.row("D:/Users/Rick/Documents/Magic Briefcase/D", "folder", false, true)}${this.row("C:/", "folder", false)}${this.row("D:/", "folder", true)}</div>
                  <div class="vs"><div class="sb">${tri("up")}</div><div class="sb thumb"></div><div class="sb">${tri("up")}</div><div class="sb">${tri("down")}</div></div>
                  <div class="hs"><div class="sb">${tri("left")}</div><div class="sb thumb"><i></i></div><div class="gap"></div><div class="sb">${tri("left")}</div><div class="sb">${tri("right")}</div></div><div></div></div>
              </div>
              <div class="layers"><div class="frame"></div>${this.titleBar("Layers", 106, 107, 4)}
                <div class="ticons">${["group", "eye", "filter", "expand", "collapse", "remove"].map((n) => icon(S[n], 16))}</div>
                <div class="list"><div class="note">Layers Panel</div></div></div>
              <div class="path">${this.titleBar("Shortest path", 94, 89, 4)}
                <div class="form">
                  <span>Start</span>
                  <div class="fr" style="margin-top:2px"><div class="inp"></div><div class="btn pick">${icon(S.crossblue, 16)}</div></div>
                  <span style="margin-top:8px">Stop</span>
                  <div class="fr" style="margin-top:2px"><div class="inp"></div><div class="btn pick">${icon(S.crossblue, 16)}</div></div>
                  <div class="fr" style="margin-top:7px"><span style="width:142px">Criterion</span><div class="combo" style="width:135px"><b>Length</b><div class="a">${tri("down")}</div></div></div>
                  <div class="fr" style="margin-top:7px"><span style="width:39px">Length</span><div class="inp"></div></div>
                  <div class="fr" style="margin-top:7px"><span style="width:28px">Time</span><div class="inp"></div></div>
                  <div class="wide" style="gap:10px;margin-top:9px">${["Calculate", "Export", "Clear"].map((t) => html`<div class="btn act" style="height:23px;flex:1">${t}</div>`)}</div>
                  <div class="btn act" style="height:26px;margin-top:9px;gap:3px">${icon(S.buoy, 16)}Help</div>
                </div></div>
            </div>
            <div class="map"><div class="note">Map Window</div></div>
          </div>
          <div class="status"><div class="btn">${icon(S.mouse, 16)}</div><span class="g1">Coordinate:</span>
            <div class="inp g2" style="width:216px">-0.164,-0.451</div><span class="g1">Scale</span>
            <div class="combo" style="width:89px;margin-left:11px;padding-left:4px;background:#fff"><b>1:1,461,399</b><div class="a">${tri("down")}</div></div><span class="g1">Rotation:</span>
            <div class="spin">0.0<div class="ar">${tri("up")}${tri("down")}</div></div>
            <div class="chk"><svg width="9" height="9"><path d="M1 1l7 7M8 1L1 8" stroke="#000" stroke-width="2.600"/></svg></div><span class="g6">Render</span>
            <span class="g3">${icon(S.globe, 16)}</span><span class="g4">EPSG:4326</span>
            <svg class="g5" width="18" height="16"><path d="M9 1c5 0 8.500 2.800 8.500 6.500 0 2-1 3.700-2.500 4.700L17 16l-5-2.200Q11 14 9 14C4 14 .5 11.200.5 7.500S4 1 9 1z" fill="#666"/></svg>
            <svg style="margin:18px 0 0 21px" width="12" height="12"><path d="M0 12L12 0M4 12l8-8M8 12l4-4" stroke="#999"/></svg>
          </div>
        </div>
      </div>`;
  }
}
